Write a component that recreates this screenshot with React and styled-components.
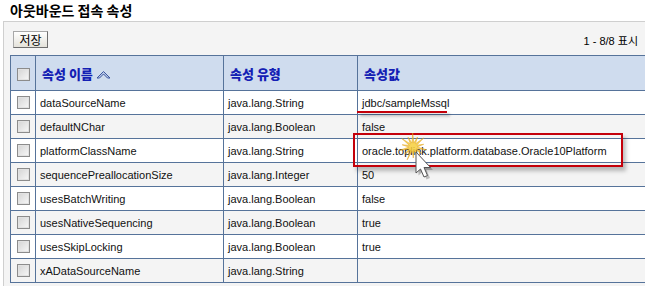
import React from "react";
import styled, { createGlobalStyle } from "styled-components";

const GlobalStyle = createGlobalStyle`
	html, body {
		margin: 0;
		padding: 0;
		background: #ffffff;
	}
	body {
		font-family: "Liberation Sans", Arial, sans-serif;
		font-size: 11px;
		color: #1b1b1b;
	}
`;

const Page = styled.div`
	width: 645px;
	height: 286px;
	overflow: hidden;
	background: #ffffff;
`;

const Title = styled.h1`
	margin: 0;
	height: 21px;
	padding-left: 10px;
	font-family: "Noto Sans CJK KR", sans-serif;
	font-size: 14px;
	font-weight: 700;
	line-height: 21px;
	color: #000;
`;

const Panel = styled.div`
	margin-left: 3px;
	height: 300px;
	border-top: 1px solid #cfcfcf;
	border-left: 1px solid #cfcfcf;
	background: #f4f4f4;
	padding: 9px 0 0 6px;
`;

const Toolbar = styled.div`
	display: flex;
	align-items: center;
	justify-content: space-between;
	height: 17px;
	padding: 0 7px 0 3px;
	margin-bottom: 7px;
`;

const SaveButton = styled.button`
	height: 17px;
	width: 35px;
	padding: 0;
	border: 1px solid #6e6e6e;
	border-top-color: #a8a8a8;
	border-left-color: #a8a8a8;
	background: linear-gradient(#ffffff, #e4e2da);
	font-family: "Noto Sans CJK KR", sans-serif;
	font-size: 12px;
	line-height: 14px;
	color: #000;
`;

const Paging = styled.span`
	font-size: 11px;
	color: #000;
	font-family: "Liberation Sans", "Noto Sans CJK KR", sans-serif;
`;

const TableWrap = styled.div`
	position: relative;
	width: 650px;
`;

const Table = styled.table`
	width: 650px;
	border-collapse: collapse;
	table-layout: fixed;
	border-top: 1px solid #56739a;
	border-left: 1px solid #56739a;
`;

const HeadCell = styled.th`
	height: 34px;
	padding: 0 0 0 ${(p) => (p.center ? 0 : 6)}px;
	text-align: ${(p) => (p.center ? "center" : "left")};
	background: #cfdcee;
	border-right: 1px solid #56739a;
	border-bottom: 1px solid #56739a;
	font-family: "Noto Sans CJK KR", sans-serif;
	font-size: 13px;
	font-weight: 900;
	color: #1420b4;
	white-space: nowrap;
`;

const Row = styled.tr`
	background: ${(p) => (p.odd ? "#f4f4f4" : "#ffffff")};
`;

const Cell = styled.td`
	height: 23px;
	padding: 0 0 0 ${(p) => (p.center ? 0 : 4)}px;
	text-align: ${(p) => (p.center ? "center" : "left")};
	border-right: 1px solid #56739a;
	border-bottom: 1px solid #56739a;
	white-space: nowrap;
	overflow: hidden;
	font-size: 11px;
	color: #111;
`;

const Check = styled.span`
	display: inline-block;
	vertical-align: middle;
	width: 11px;
	height: 11px;
	border: 1px solid #8c8c8c;
	background: linear-gradient(135deg, #d4d4d4, #f8f8f8);
	box-shadow: inset 0 0 0 1px #e2e2e2;
`;

const SortIcon = styled.svg`
	vertical-align: -1px;
	margin-left: 3px;
`;

const RedBox = styled.div`
	position: absolute;
	left: 343px;
	top: 78px;
	width: 266px;
	height: 30px;
	border: 2px solid #c4000a;
	box-shadow: 3px 4px 4px rgba(0, 0, 0, 0.25);
	pointer-events: none;
`;

const Underline = styled.div`
	position: absolute;
	left: 347px;
	top: 56px;
	width: 90px;
	height: 2px;
	background: #c4000a;
	box-shadow: 3px 3px 3px rgba(0, 0, 0, 0.3);
`;

const Pointer = styled.svg`
	position: absolute;
	left: 381px;
	top: 77px;
`;

const rows = [
	["dataSourceName", "java.lang.String", "jdbc/sampleMssql"],
	["defaultNChar", "java.lang.Boolean", "false"],
	["platformClassName", "java.lang.String", "oracle.toplink.platform.database.Oracle10Platform"],
	["sequencePreallocationSize", "java.lang.Integer", "50"],
	["usesBatchWriting", "java.lang.Boolean", "false"],
	["usesNativeSequencing", "java.lang.Boolean", "true"],
	["usesSkipLocking", "java.lang.Boolean", "true"],
	["xADataSourceName", "java.lang.String", ""],
];

const burst = (() => {
	const pts = [];
	const cx = 22;
	const cy = 15;
	for (let i = 0; i < 28; i++) {
		const a = (i / 28) * Math.PI * 2 + 0.2;
		const r = i % 2 === 0 ? (i % 4 === 0 ? 14 : 11) : 4;
		pts.push(`${(cx + Math.cos(a) * r).toFixed(1)},${(cy + Math.sin(a) * r).toFixed(1)}`);
	}
	return pts.join(" ");
})();

const arrow = "M25 20 L25 41 L29.5 37 L33 45 L36.5 43.5 L33 35.5 L39.5 35.5 Z";

export default function App() {
	return (
		<Page>
			<GlobalStyle />
			<Title>아웃바운드 접속 속성</Title>
			<Panel>
				<Toolbar>
					<SaveButton>저장</SaveButton>
					<Paging>1 - 8/8 표시</Paging>
				</Toolbar>
				<TableWrap>
					<Table>
						<colgroup>
							<col style={{ width: 25 }} />
							<col style={{ width: 188 }} />
							<col style={{ width: 134 }} />
							<col />
						</colgroup>
						<thead>
							<tr>
								<HeadCell center>
									<Check />
								</HeadCell>
								<HeadCell>
									속성 이름
									<SortIcon width="15" height="10" viewBox="0 0 15 10">
										<path
											d="M1 8 L7.5 1.5 L14 8 L11.5 8 L7.5 4 L3.5 8 Z"
											fill="#b8c8e4"
											stroke="#3b55a0"
											strokeWidth="1"
											strokeLinejoin="round"
										/>
									</SortIcon>
								</HeadCell>
								<HeadCell>속성 유형</HeadCell>
								<HeadCell>속성값</HeadCell>
							</tr>
						</thead>
						<tbody>
							{rows.map(([name, type, value], i) => (
								<Row key={name} odd={i % 2 === 1}>
									<Cell center>
										<Check />
									</Cell>
									<Cell>{name}</Cell>
									<Cell>{type}</Cell>
									<Cell>{value}</Cell>
								</Row>
							))}
						</tbody>
					</Table>
					<Underline />
					<RedBox />
					<Pointer width="50" height="50" viewBox="0 0 50 50">
						<polygon points={burst} fill="#f6cf3c" stroke="#e0a010" strokeWidth="0.6" opacity="0.85" />
						<path d={arrow} fill="rgba(0,0,0,0.22)" transform="translate(2.5 2.5)" />
						<path d={arrow} fill="#ffffff" stroke="#555" strokeWidth="1" strokeLinejoin="round" />
					</Pointer>
				</TableWrap>
			</Panel>
		</Page>
	);
}
